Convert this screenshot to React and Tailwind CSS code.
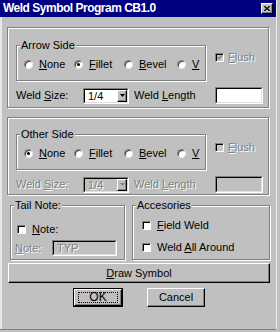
const dis = 'text-[#808080] [text-shadow:1px_1px_0_#fff]';
const raised = 'border border-t-white border-l-white border-r-black border-b-black shadow-[inset_-1px_-1px_0_#808080]';
const sunken = 'border border-t-[#808080] border-l-[#808080] border-r-white border-b-white';

const Group = ({ title, className, labelLeft = 'left-[3px]', children }) => (
  <div className={`relative border border-[#808080] shadow-[inset_1px_1px_0_#fff,1px_1px_0_#fff] ${className}`}>
    {title && (
      <span className={`absolute -top-[7px] ${labelLeft} bg-[#c0c0c0] px-[1px] leading-[13px]`}>{title}</span>
    )}
    {children}
  </div>
);

const Radio = ({ checked, children, className }) => (
  <div className={`flex items-center h-[13px] shrink-0 ${className}`}>
    <span className="w-[9px] h-[9px] rounded-full bg-white border border-t-[#808080] border-l-[#808080] border-r-[#e8e8e8] border-b-[#e8e8e8] shadow-[inset_1px_1px_0_#404040] flex items-center justify-center">
      {checked && <span className="w-[3px] h-[3px] rounded-full bg-black" />}
    </span>
    <span className="ml-[6px] leading-[13px]">{children}</span>
  </div>
);

const Check = ({ checked, disabled, children, className, gap = 'ml-[5px]' }) => (
  <div className={`flex items-center h-[13px] ${className}`}>
    <span
      className={`w-[9px] h-[9px] ${sunken} shadow-[inset_1px_1px_0_#000] flex items-center justify-center ${
        disabled ? 'bg-[#c8c8c8]' : 'bg-white'
      }`}
    >
      {checked && (
        <svg width="7" height="7" viewBox="0 0 7 7">
          <path d="M1 3 L3 5 L6 1" fill="none" stroke={disabled ? '#808080' : '#000'} strokeWidth="1.4" />
        </svg>
      )}
    </span>
    <span className={`${gap} leading-[13px] ${disabled ? dis : ''}`}>{children}</span>
  </div>
);

const Select = ({ disabled }) => (
  <div className={`w-[46px] h-[16px] flex ${sunken}`}>
    <div
      className={`flex-1 flex border border-t-black border-l-black border-r-[#dfdfdf] border-b-[#dfdfdf] ${
        disabled ? 'bg-[#c0c0c0]' : 'bg-white'
      }`}
    >
      <span className={`flex-1 pl-[3px] leading-[12px] ${disabled ? dis : ''}`}>1/4</span>
      <div className={`w-[10px] h-full bg-[#c0c0c0] ${raised} flex items-center justify-center`}>
        <svg width="5" height="3" viewBox="0 0 5 3">
          <path d="M0 0 H5 L2.5 3 Z" fill={disabled ? '#808080' : '#000'} />
        </svg>
      </div>
    </div>
  </div>
);

const Field = ({ className, disabled, children }) => (
  <div className={`${sunken} ${className}`}>
    <div
      className={`w-full h-full border border-t-black border-l-black border-r-[#dfdfdf] border-b-[#dfdfdf] ${
        disabled ? 'bg-[#c0c0c0]' : 'bg-white'
      } pl-[3px] leading-[12px]`}
    >
      {children}
    </div>
  </div>
);

const SideFrame = ({ title, selected, disabled, className }) => (
  <Group className={`ml-[5px] w-[262px] h-[81px] pl-[8px] ${className}`}>
    <div className="flex items-start">
      <Group title={title} className="w-[190px] h-[36px] pl-[7px]" labelLeft="left-[3px]">
        <div className="flex mt-[12px]">
          <Radio checked={selected === 'None'} className="w-[50px]">
            <u>N</u>one
          </Radio>
          <Radio checked={selected === 'Fillet'} className="w-[50px]">
            <u>F</u>illet
          </Radio>
          <Radio checked={selected === 'Bevel'} className="w-[53px]">
            <u>B</u>evel
          </Radio>
          <Radio checked={selected === 'V'}>
            <u>V</u>
          </Radio>
        </div>
      </Group>
      <Check checked={!disabled} disabled className={`ml-[9px] ${disabled ? 'mt-[7px]' : 'mt-[6px]'}`} gap="ml-[4px]">
        <u>F</u>lush
      </Check>
    </div>
    <div className="flex items-center h-[17px] mt-[6px]">
      <span className={`w-[67px] leading-[13px] ${disabled ? dis : ''}`}>
        Weld <u>S</u>ize:
      </span>
      <Select disabled={disabled} />
      <span className={`ml-[5px] w-[81px] leading-[13px] ${disabled ? dis : ''}`}>
        Weld <u>L</u>ength
      </span>
      <Field className="w-[48px] h-[17px]" disabled={disabled} />
    </div>
  </Group>
);

export default function App() {
  return (
    <div className="w-[280px] h-[332px] bg-[#c0c0c0] text-[11px] text-black font-['Liberation_Sans',Arial,sans-serif] overflow-hidden">
      <div className="w-[277px] h-[330px] flex flex-col border-r border-r-[#f0f0f0] border-b border-b-[#808080]">
        <div className="h-[17px] bg-[#000080] flex items-center justify-between pl-[3px] pr-[3px]">
          <span className="text-white font-bold text-[12px] tracking-[-0.5px] leading-[13px]">Weld Symbol Program CB1.0</span>
          <div className={`w-[12px] h-[11px] bg-[#c0c0c0] ${raised} flex items-center justify-center`}>
            <svg width="6" height="5" viewBox="0 0 6 5">
              <path d="M0 0 L6 5 M6 0 L0 5" stroke="#000" strokeWidth="1.3" />
            </svg>
          </div>
        </div>
        <div className="flex-1 flex flex-col border-l-2 border-l-[#e8e8e8]">
          <SideFrame title="Arrow Side" selected="Fillet" className="mt-[10px] pt-[17px]" />
          <SideFrame title="Other Side" selected="None" disabled className="mt-[9px] pt-[16px] !h-[78px]" />

          <div className="flex mt-[10px]">
            <Group title="Tail Note:" className="ml-[8px] w-[115px] h-[55px] pl-[6px]">
              <Check className="mt-[17px]" gap="ml-[6px]">
                <u>N</u>ote:
              </Check>
              <div className="flex items-center h-[16px] mt-[4px] -ml-[2px]">
                <span className={`w-[37px] leading-[13px] ${dis}`}>
                  <u>N</u>ote:
                </span>
                <Field className="w-[65px] h-[16px]" disabled>
                  <span className={dis}>TYP</span>
                </Field>
              </div>
            </Group>
            <Group title="Accesories" className="ml-[7px] w-[138px] h-[55px] pl-[9px]">
              <Check className="mt-[13px]" gap="ml-[6px]">
                <u>F</u>ield Weld
              </Check>
              <Check className="mt-[9px]" gap="ml-[6px]">
                Weld <u>A</u>ll Around
              </Check>
            </Group>
          </div>

          <button className={`mt-[3px] ml-[6px] w-[262px] h-[20px] bg-[#c0c0c0] ${raised} flex items-center justify-center leading-[13px]`}>
            <span>
              <u>D</u>raw Symbol
            </span>
          </button>

          <div className="flex mt-[5px]">
            <div className="ml-[71px] w-[50px] h-[19px] border border-black">
              <button className={`relative w-full h-full bg-[#c0c0c0] ${raised} flex items-center justify-center text-[12px] leading-[13px]`}>
                <span className="absolute inset-x-[3px] inset-y-[2px] border border-dotted border-black" />
                OK
              </button>
            </div>
            <button className={`ml-[24px] w-[58px] h-[19px] bg-[#c0c0c0] ${raised} flex items-center justify-center leading-[13px]`}>
              Cancel
            </button>
          </div>
        </div>
      </div>
    </div>
  );
}
